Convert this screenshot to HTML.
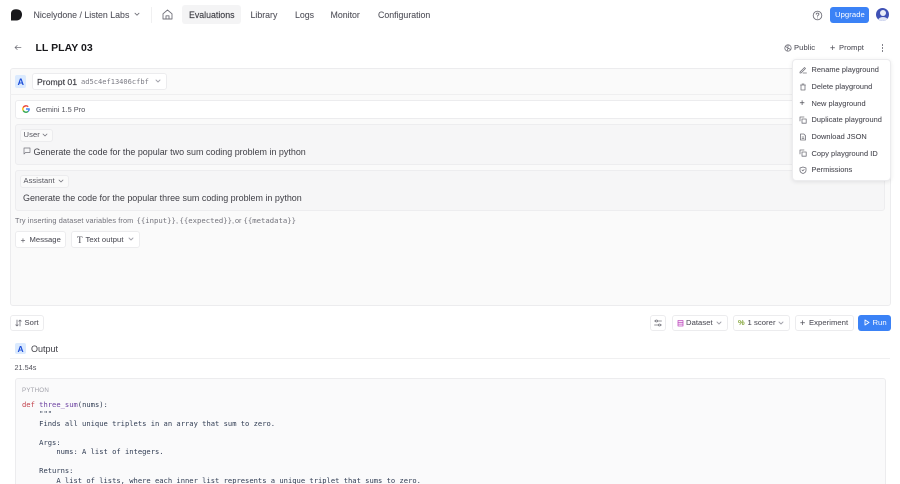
<!DOCTYPE html>
<html><head><meta charset="utf-8"><title>LL PLAY 03</title>
<style>
html,body{margin:0;padding:0;background:#fff}
#p{position:relative;width:900px;height:484px;overflow:hidden;background:#fff;font-family:"Liberation Sans",sans-serif;color:#3f3f46;filter:blur(.3px)}
#p div,#p span.t,#p svg.a{position:absolute}
.t{white-space:nowrap;line-height:12px}
.b{box-sizing:border-box;background:#fff;border:1px solid #ececee;border-radius:3px}
.g{box-sizing:border-box;background:#f6f6f7;border:1px solid #ededef;border-radius:3px}
svg{fill:none;stroke:#71717a;stroke-width:1;stroke-linecap:round;stroke-linejoin:round}
.nav{font-size:8.8px;color:#52525b;-webkit-text-stroke:.08px #52525b}
.btn{font-size:7.6px;color:#52525b;letter-spacing:.08px;-webkit-text-stroke:.08px #52525b}
.m{font-size:7.4px;color:#4b4b53;letter-spacing:.05px;-webkit-text-stroke:.08px #4b4b53}
.code{font-family:"DejaVu Sans Mono","Liberation Mono",monospace;font-size:7.13px;line-height:9.55px;color:#2f3b52;white-space:pre}
.h{font-size:7.3px;color:#71717a;top:215px}
.hm{font-family:"DejaVu Sans Mono",monospace;font-size:7.28px;color:#71717a;top:215px}
</style></head><body><div id="p">

<!-- top nav -->
<svg class="a" style="left:11px;top:9px;stroke:none" width="12" height="12" viewBox="0 0 12 12"><path style="fill:#18181b;stroke:none" d="M0 11.500V4.500C0 1.800 2 .2 5 .2c3.800 0 6 2 6 5.300 0 3.500-2.300 6-5.500 6H0z"/></svg>
<span class="t nav" style="left:33.500px;top:9px">Nicelydone / Listen Labs</span>
<svg class="a" style="left:134px;top:12px" width="6" height="5" viewBox="0 0 6 5"><path stroke-width=".9" d="M1 1.200l2 2 2-2"/></svg>
<div style="left:150.500px;top:7px;width:1px;height:16px;background:#f0f0f1"></div>
<svg class="a" style="left:162px;top:9px" width="11" height="11" viewBox="0 0 11 11"><path stroke-width=".9" d="M1 4.800L5.500 1 10 4.800V10H1zM4 10V6.800h3V10"/></svg>
<div style="left:182px;top:5px;width:59px;height:19px;background:#f4f4f5;border-radius:3px"></div>
<span class="t nav" style="left:189px;top:9px;color:#3f3f46;-webkit-text-stroke:.15px #3f3f46">Evaluations</span>
<span class="t nav" style="left:250.500px;top:9px">Library</span>
<span class="t nav" style="left:295px;top:9px">Logs</span>
<span class="t nav" style="left:330.500px;top:9px">Monitor</span>
<span class="t nav" style="left:378px;top:9px">Configuration</span>

<svg class="a" style="left:812px;top:9.500px" width="11" height="11" viewBox="0 0 11 11"><circle cx="5.500" cy="5.500" r="4.300" stroke-width=".9"/><path stroke-width=".9" d="M4.200 4.300c0-1.600 2.700-1.600 2.700 0 0 1-1.400 1-1.400 2M5.500 7.900v.1"/></svg>
<div style="left:830px;top:6.500px;width:39px;height:16.500px;background:#3b82f6;border-radius:3px"></div>
<span class="t" style="left:835px;top:9px;font-size:7.700px;color:#fff;letter-spacing:.05px">Upgrade</span>
<div style="left:876px;top:8px;width:13px;height:13px;border-radius:50%;background:#3f51b5;overflow:hidden">
  <div style="left:3.500px;top:2px;width:6px;height:6px;border-radius:50%;background:#e8ecf8"></div>
  <div style="left:1.500px;top:8.500px;width:10px;height:7px;border-radius:50%;background:#dfe4f5"></div>
</div>

<!-- title row -->
<svg class="a" style="left:14px;top:44px" width="8" height="7" viewBox="0 0 8 7"><path stroke-width=".8" d="M7 3.500H1.200M3.200 1.500L1 3.500 3.200 5.500"/></svg>
<span class="t" style="left:35.500px;top:41.500px;font-size:10.500px;font-weight:bold;color:#18181b;letter-spacing:.02px">LL PLAY 03</span>
<svg class="a" style="left:784px;top:43.500px" width="8" height="8" viewBox="0 0 8 8"><circle cx="4" cy="4" r="3.200" stroke-width=".8"/><path stroke-width=".8" d="M1.500 2.500l2.500 1.500 2.500 1.500M4 1v2M3 7l1-3"/></svg>
<span class="t btn" style="left:794px;top:41.500px">Public</span>
<span class="t btn" style="left:830px;top:41.500px;font-size:9px">+</span>
<span class="t btn" style="left:839px;top:41.500px">Prompt</span>
<div style="left:881.500px;top:44px;width:1.500px;height:1.500px;background:#71717a;border-radius:50%"></div>
<div style="left:881.500px;top:47px;width:1.500px;height:1.500px;background:#71717a;border-radius:50%"></div>
<div style="left:881.500px;top:50px;width:1.500px;height:1.500px;background:#71717a;border-radius:50%"></div>

<!-- main panel -->
<div style="left:9.500px;top:68px;width:881px;height:238px;box-sizing:border-box;background:#fafafa;border:1px solid #ececee;border-radius:3px"></div>
<div style="left:10px;top:94px;width:880px;height:1px;background:#efeff0"></div>
<div style="left:15px;top:75px;width:11px;height:13px;background:#dbeafe;border-radius:2px"></div>
<span class="t" style="left:17.500px;top:76px;font-size:9px;font-weight:bold;color:#1d4ed8">A</span>
<div class="b" style="left:31.500px;top:73px;width:135px;height:17px"></div>
<span class="t" style="left:37px;top:75.500px;font-size:8.700px;color:#3f3f46;-webkit-text-stroke:.15px #3f3f46">Prompt 01</span>
<span class="t" style="left:81px;top:76px;font-family:'DejaVu Sans Mono',monospace;font-size:7.050px;color:#7b7b84">ad5c4ef13406cfbf</span>
<svg class="a" style="left:155px;top:79px" width="6" height="5" viewBox="0 0 6 5"><path style="stroke:#a1a1aa" stroke-width=".9" d="M1 1l2 2 2-2"/></svg>

<!-- model -->
<div class="b" style="left:15px;top:100px;width:870px;height:19px"></div>
<svg class="a" style="left:22px;top:105px;stroke:none" width="8" height="8" viewBox="0 0 8 8"><path style="stroke:#4285f4;stroke-width:1.400;stroke-linecap:butt" d="M4 4h3.200a3.200 3.200 0 0 1-1 2.400"/><path style="stroke:#34a853;stroke-width:1.400;stroke-linecap:butt" d="M6.200 6.400A3.200 3.200 0 0 1 1.200 5.500"/><path style="stroke:#fbbc05;stroke-width:1.400;stroke-linecap:butt" d="M1.200 5.500a3.200 3.200 0 0 1 0-3"/><path style="stroke:#ea4335;stroke-width:1.400;stroke-linecap:butt" d="M1.200 2.500A3.200 3.200 0 0 1 6.200 1.700"/></svg>
<span class="t" style="left:36px;top:103.500px;font-size:7.400px;color:#52525b">Gemini 1.5 Pro</span>

<!-- user message -->
<div class="g" style="left:15px;top:124px;width:870px;height:41px"></div>
<div class="b" style="left:19.500px;top:129px;width:33px;height:12.500px;background:#fafafa"></div>
<span class="t" style="left:23.500px;top:129px;font-size:7.600px;color:#52525b;letter-spacing:.1px">User</span>
<svg class="a" style="left:42px;top:133px" width="6" height="5" viewBox="0 0 6 5"><path stroke-width=".8" d="M1 1l2 2 2-2"/></svg>
<svg class="a" style="left:23px;top:147px" width="8" height="8" viewBox="0 0 8 8"><path stroke-width=".7" d="M1 1h6v4.500H2.500L1 7z"/></svg>
<span class="t" style="left:33.500px;top:146px;font-size:8.950px;color:#3f3f46">Generate the code for the popular two sum coding problem in python</span>

<!-- assistant message -->
<div class="g" style="left:15px;top:170px;width:870px;height:41px"></div>
<div class="b" style="left:19.500px;top:175px;width:49px;height:12.500px;background:#fafafa"></div>
<span class="t" style="left:23.500px;top:175px;font-size:7.500px;color:#52525b;letter-spacing:.08px">Assistant</span>
<svg class="a" style="left:58px;top:179px" width="6" height="5" viewBox="0 0 6 5"><path stroke-width=".8" d="M1 1l2 2 2-2"/></svg>
<span class="t" style="left:23px;top:192px;font-size:8.950px;color:#3f3f46">Generate the code for the popular three sum coding problem in python</span>

<!-- hint -->
<span class="t h" style="left:15px;letter-spacing:.13px">Try inserting dataset variables from</span>
<span class="t hm" style="left:136.500px">{{input}}</span>
<span class="t h" style="left:176px">,</span>
<span class="t hm" style="left:179.500px">{{expected}}</span>
<span class="t h" style="left:232px">,</span>
<span class="t h" style="left:235px">or</span>
<span class="t hm" style="left:243.500px">{{metadata}}</span>

<div class="b" style="left:15px;top:231px;width:51px;height:17px"></div>
<span class="t" style="left:20.500px;top:233.500px;font-size:8.500px;color:#52525b">+</span>
<span class="t btn" style="left:29.500px;top:233.500px">Message</span>
<div class="b" style="left:70.500px;top:231px;width:69px;height:17px"></div>
<span class="t btn" style="left:77px;top:233.500px;font-family:'Liberation Serif',serif;font-size:9px">T</span>
<span class="t btn" style="left:85.500px;top:233.500px">Text output</span>
<svg class="a" style="left:127.500px;top:237px" width="6" height="5" viewBox="0 0 6 5"><path style="stroke:#a1a1aa" stroke-width=".9" d="M1 1l2 2 2-2"/></svg>

<!-- toolbar -->
<div class="b" style="left:10px;top:315px;width:34px;height:16px"></div>
<svg class="a" style="left:15px;top:319px" width="7" height="8" viewBox="0 0 7 8"><path stroke-width=".8" d="M2 1v6M.8 5.800L2 7l1.200-1.200M5 7V1M3.800 2.200L5 1l1.200 1.200"/></svg>
<span class="t btn" style="left:24.500px;top:317px">Sort</span>

<div class="b" style="left:650px;top:315px;width:16px;height:16px"></div>
<svg class="a" style="left:654px;top:319px" width="8" height="8" viewBox="0 0 8 8"><path stroke-width=".8" d="M.5 2h7M.5 6h7"/><circle cx="2.500" cy="2" r="1" style="fill:#fff" stroke-width=".8"/><circle cx="5.500" cy="6" r="1" style="fill:#fff" stroke-width=".8"/></svg>
<div class="b" style="left:671.500px;top:315px;width:56px;height:16px"></div>
<svg class="a" style="left:677px;top:319px" width="7" height="8" viewBox="0 0 7 8"><path style="stroke:#c04fc0" stroke-width=".8" d="M1 1.500h5V7H1zM1 3.300h5M1 5.100h5"/></svg>
<span class="t btn" style="left:686px;top:317px">Dataset</span>
<svg class="a" style="left:715.500px;top:321px" width="6" height="5" viewBox="0 0 6 5"><path style="stroke:#a1a1aa" stroke-width=".9" d="M1 1l2 2 2-2"/></svg>
<div class="b" style="left:732.500px;top:315px;width:57px;height:16px"></div>
<span class="t" style="left:738px;top:317px;font-size:7.500px;color:#84a53a;font-weight:bold">%</span>
<span class="t btn" style="left:747.500px;top:317px">1 scorer</span>
<svg class="a" style="left:777.500px;top:321px" width="6" height="5" viewBox="0 0 6 5"><path style="stroke:#a1a1aa" stroke-width=".9" d="M1 1l2 2 2-2"/></svg>
<div class="b" style="left:794.500px;top:315px;width:59px;height:16px"></div>
<span class="t btn" style="left:800px;top:317px;font-size:9px">+</span>
<span class="t btn" style="left:809px;top:317px">Experiment</span>
<div style="left:858px;top:314.500px;width:32.500px;height:16.500px;background:#3b82f6;border-radius:3px"></div>
<svg class="a" style="left:864px;top:319px" width="6" height="7" viewBox="0 0 6 7"><path style="stroke:#fff" stroke-width=".9" d="M1 1l4 2.500L1 6z"/></svg>
<span class="t" style="left:872.500px;top:317px;font-size:7.700px;color:#fff">Run</span>

<!-- output -->
<div style="left:15px;top:343px;width:11px;height:11px;background:#dbeafe;border-radius:2px"></div>
<span class="t" style="left:17.500px;top:342.500px;font-size:8.500px;font-weight:bold;color:#1d4ed8">A</span>
<span class="t" style="left:31px;top:342.500px;font-size:9px;color:#3f3f46">Output</span>
<div style="left:10px;top:358px;width:880px;height:1px;background:#f0f0f1"></div>
<span class="t" style="left:14.500px;top:362px;font-size:7.300px;color:#52525b">21.54s</span>
<div style="left:14.500px;top:377.500px;width:871px;height:120px;box-sizing:border-box;background:#fafafb;border:1px solid #ececee;border-radius:3px"></div>
<span class="t" style="left:22px;top:385px;font-size:6.200px;color:#a1a1aa;letter-spacing:.2px">PYTHON</span>
<div class="code" style="left:22px;top:399.500px"><span style="color:#c2414b">def</span> <span style="color:#6b3fa0">three_sum</span>(nums):
    """
    Finds all unique triplets in an array that sum to zero.

    Args:
        nums: A list of integers.

    Returns:
        A list of lists, where each inner list represents a unique triplet that sums to zero.</div>

<!-- dropdown -->
<div style="left:792px;top:58.500px;width:98.500px;height:122px;box-sizing:border-box;background:#fff;border:1px solid #ececee;border-radius:4px;box-shadow:0 1px 4px rgba(0,0,0,.09)"></div>
<svg class="a" style="left:799px;top:65.500px" width="8" height="8" viewBox="0 0 8 8"><path stroke-width=".8" d="M1 6l4.500-4.500 1 1L2 7H1zM4 7h3.500"/></svg>
<span class="t m" style="left:811.500px;top:64px">Rename playground</span>
<svg class="a" style="left:799px;top:82.500px" width="8" height="8" viewBox="0 0 8 8"><path stroke-width=".8" d="M2 2h4v5H2zM1.500 2h5M3 1h2"/></svg>
<span class="t m" style="left:811.500px;top:80.500px">Delete playground</span>
<span class="t m" style="left:799.500px;top:97px;font-size:9px">+</span>
<span class="t m" style="left:811.500px;top:97.500px">New playground</span>
<svg class="a" style="left:799px;top:115.500px" width="8" height="8" viewBox="0 0 8 8"><path stroke-width=".8" d="M3 3h4.200v4.200H3zM1 5V1h4"/></svg>
<span class="t m" style="left:811.500px;top:114px">Duplicate playground</span>
<svg class="a" style="left:799px;top:132.500px" width="8" height="8" viewBox="0 0 8 8"><path stroke-width=".8" d="M1.500 1h3.300L6.500 2.700V7h-5zM3 4h2M3 5.500h2"/></svg>
<span class="t m" style="left:811.500px;top:130.500px">Download JSON</span>
<svg class="a" style="left:799px;top:149px" width="8" height="8" viewBox="0 0 8 8"><path stroke-width=".8" d="M3 3h4.200v4.200H3zM1 5V1h4"/></svg>
<span class="t m" style="left:811.500px;top:147.500px">Copy playground ID</span>
<svg class="a" style="left:799px;top:165.500px" width="8" height="8" viewBox="0 0 8 8"><path stroke-width=".8" d="M4 1l3 1v2.500C7 6 5.500 7 4 7.500 2.500 7 1 6 1 4.500V2zM3 4l.8.800L5.200 3.500"/></svg>
<span class="t m" style="left:811.500px;top:164px">Permissions</span>

</div></body></html>
